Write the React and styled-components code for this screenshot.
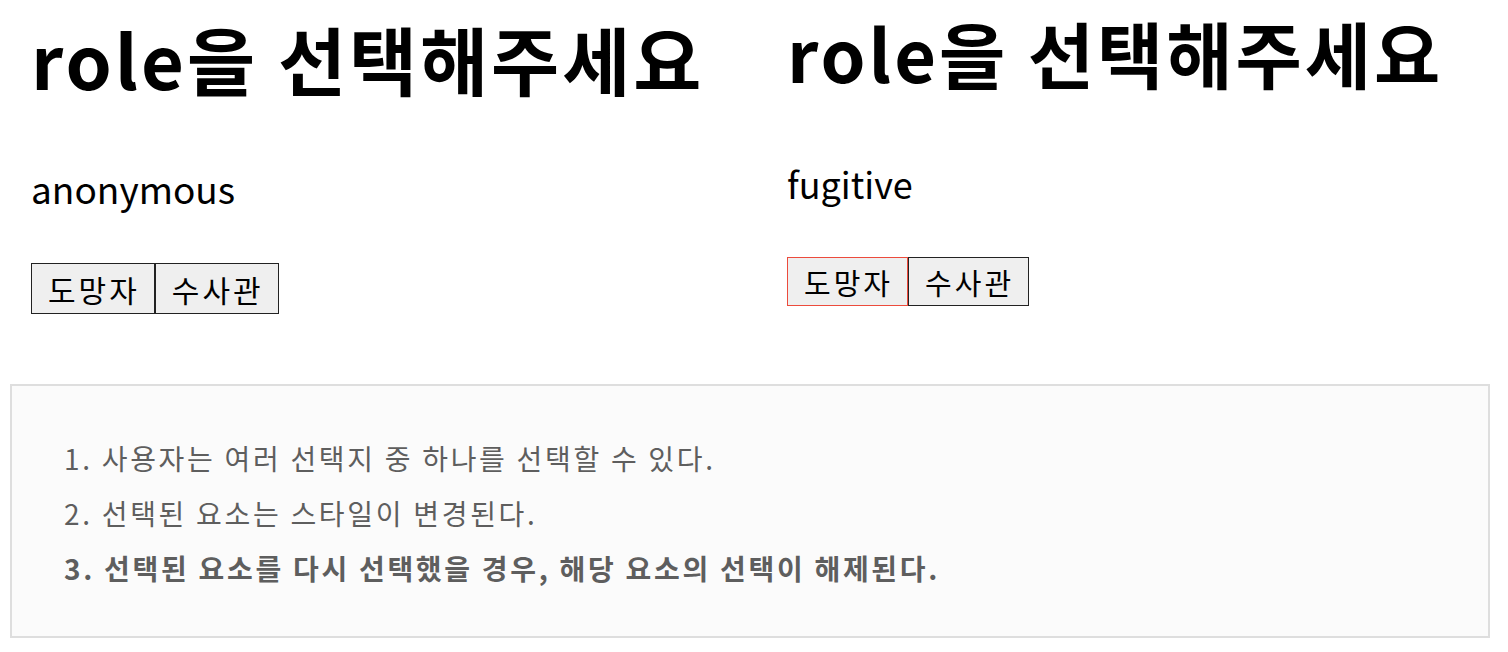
import React, { useState } from "react";
import styled, { createGlobalStyle } from "styled-components";

const GlobalStyle = createGlobalStyle`
  body {
    margin: 0;
    background: #fff;
    font-family: "Noto Sans CJK KR", "Noto Sans", sans-serif;
    color: #000;
  }
`;

const ROLES = [
  { id: "fugitive", label: "도망자" },
  { id: "police", label: "수사관" },
];

const RoleSelect = ({ initial, compact }) => {
  const [role, setRole] = useState(initial);

  //Toggle: clicking the selected one clears it
  const pick = (id) => setRole(role === id ? null : id);

  return (
    <Column $compact={compact}>
      <Title $compact={compact}>role을 선택해주세요</Title>
      <Current $compact={compact}>{role || "anonymous"}</Current>
      <ButtonGroup>
        {ROLES.map((item) => (
          <RoleButton
            key={item.id}
            $compact={compact}
            $selected={role === item.id}
            onClick={() => pick(item.id)}
          >
            {item.label}
          </RoleButton>
        ))}
      </ButtonGroup>
    </Column>
  );
};

export default function App() {
  return (
    <>
      <GlobalStyle />
      <Page>
        <Columns>
          <RoleSelect initial={null} />
          <RoleSelect initial="fugitive" compact />
        </Columns>
        <Notes>
          <NoteList>
            <Note>사용자는 여러 선택지 중 하나를 선택할 수 있다.</Note>
            <Note>선택된 요소는 스타일이 변경된다.</Note>
            <Note $strong>선택된 요소를 다시 선택했을 경우, 해당 요소의 선택이 해제된다.</Note>
          </NoteList>
        </Notes>
      </Page>
    </>
  );
}

const Page = styled.div`
  display: flex;
  flex-direction: column;
  padding: 0 18px 0 10px;
`;

const Columns = styled.div`
  display: grid;
  grid-template-columns: 1fr 1fr;
  align-items: start;
`;

const Column = styled.section`
  display: flex;
  flex-direction: column;
  align-items: flex-start;
  padding-left: ${(p) => (p.$compact ? "37px" : "21px")};
`;

const Title = styled.h1`
  margin: ${(p) => (p.$compact ? "2px" : "6px")} 0 0;
  font-size: ${(p) => (p.$compact ? "72px" : "74px")};
  font-weight: 700;
  line-height: 1.4;
  letter-spacing: 3px;
`;

const Current = styled.p`
  margin: ${(p) => (p.$compact ? "55px" : "53px")} 0 0;
  font-size: ${(p) => (p.$compact ? "36px" : "37px")};
  line-height: 1.4;
`;

const ButtonGroup = styled.div`
  display: flex;
  margin-top: 49px;
`;

const RoleButton = styled.button`
  font-family: "Noto Sans CJK KR", sans-serif;
  font-size: ${(p) => (p.$compact ? "29px" : "30px")};
  letter-spacing: 3px;
  height: ${(p) => (p.$compact ? "49px" : "51px")};
  padding: 0 14px 0 16px;
  background: #efefef;
  color: #000;
  border: 1px solid ${(p) => (p.$selected ? "#ec4b3c" : "#222")};
  cursor: pointer;
`;

const Notes = styled.div`
  margin-top: 70px;
  background: #fbfbfb;
  border: 2px solid #dedede;
  padding: 54px 0 50px 52px;
`;

const NoteList = styled.ol`
  margin: 0;
  padding: 0;
  list-style: decimal inside;
  display: flex;
  flex-direction: column;
  gap: 19px;
`;

const Note = styled.li`
  font-size: 28px;
  line-height: 36px;
  letter-spacing: 2.7px;
  color: #5e5e5e;
  font-weight: ${(p) => (p.$strong ? 700 : 400)};
`;
